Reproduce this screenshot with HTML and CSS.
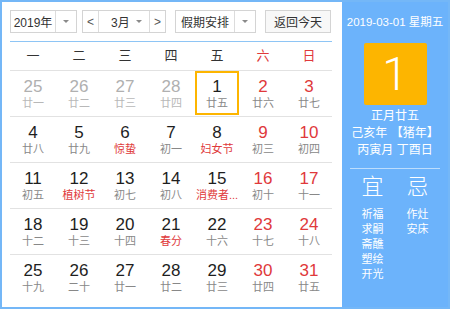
FILE: index.html
```html
<!DOCTYPE html>
<html lang="zh-CN">
<head>
    <meta charset="UTF-8">
    <meta name="viewport" content="width=device-width, initial-scale=1.0">
    <title>万年历</title>
    <link rel="stylesheet" href="styles.css">
</head>
<body>
    <div class="calendar">
        <div class="main">
            <div class="toolbar">
                <div class="select year-select">
                    <span class="select-text">2019年</span>
                    <span class="select-arrow"><i class="caret"></i></span>
                </div>
                <div class="month-group">
                    <span class="nav-btn">&lt;</span>
                    <div class="month-select">
                        <span class="select-text">3月</span>
                        <i class="caret"></i>
                    </div>
                    <span class="nav-btn">&gt;</span>
                </div>
                <div class="select holiday-select">
                    <span class="select-text">假期安排</span>
                    <span class="select-arrow"><i class="caret"></i></span>
                </div>
                <button class="today-btn">返回今天</button>
            </div>

            <div class="weekdays">
                <span>一</span><span>二</span><span>三</span><span>四</span><span>五</span>
                <span class="weekend">六</span><span class="weekend">日</span>
            </div>

            <div class="days">
                <div class="day other"><b>25</b><small>廿一</small></div>
                <div class="day other"><b>26</b><small>廿二</small></div>
                <div class="day other"><b>27</b><small>廿三</small></div>
                <div class="day other"><b>28</b><small>廿四</small></div>
                <div class="day today"><b>1</b><small>廿五</small></div>
                <div class="day weekend"><b>2</b><small>廿六</small></div>
                <div class="day weekend"><b>3</b><small>廿七</small></div>

                <div class="day"><b>4</b><small>廿八</small></div>
                <div class="day"><b>5</b><small>廿九</small></div>
                <div class="day"><b>6</b><small class="festival">惊蛰</small></div>
                <div class="day"><b>7</b><small>初一</small></div>
                <div class="day"><b>8</b><small class="festival">妇女节</small></div>
                <div class="day weekend"><b>9</b><small>初三</small></div>
                <div class="day weekend"><b>10</b><small>初四</small></div>

                <div class="day"><b>11</b><small>初五</small></div>
                <div class="day"><b>12</b><small class="festival">植树节</small></div>
                <div class="day"><b>13</b><small>初七</small></div>
                <div class="day"><b>14</b><small>初八</small></div>
                <div class="day"><b>15</b><small class="festival">消费者...</small></div>
                <div class="day weekend"><b>16</b><small>初十</small></div>
                <div class="day weekend"><b>17</b><small>十一</small></div>

                <div class="day"><b>18</b><small>十二</small></div>
                <div class="day"><b>19</b><small>十三</small></div>
                <div class="day"><b>20</b><small>十四</small></div>
                <div class="day"><b>21</b><small class="festival">春分</small></div>
                <div class="day"><b>22</b><small>十六</small></div>
                <div class="day weekend"><b>23</b><small>十七</small></div>
                <div class="day weekend"><b>24</b><small>十八</small></div>

                <div class="day"><b>25</b><small>十九</small></div>
                <div class="day"><b>26</b><small>二十</small></div>
                <div class="day"><b>27</b><small>廿一</small></div>
                <div class="day"><b>28</b><small>廿二</small></div>
                <div class="day"><b>29</b><small>廿三</small></div>
                <div class="day weekend"><b>30</b><small>廿四</small></div>
                <div class="day weekend"><b>31</b><small>廿五</small></div>
            </div>
        </div>

        <div class="side">
            <div class="side-date">2019-03-01 星期五</div>
            <div class="big-day">1</div>
            <div class="lunar">
                <div>正月廿五</div>
                <div>己亥年 【猪年】</div>
                <div>丙寅月 丁酉日</div>
            </div>
            <div class="advice">
                <div class="advice-col">
                    <div class="advice-title">宜</div>
                    <div>祈福</div>
                    <div>求嗣</div>
                    <div>斋醮</div>
                    <div>塑绘</div>
                    <div>开光</div>
                </div>
                <div class="advice-col">
                    <div class="advice-title">忌</div>
                    <div>作灶</div>
                    <div>安床</div>
                </div>
            </div>
        </div>
    </div>
</body>
</html>
```

FILE: styles.css
```css
:root {
    --blue: #6cb3fb;
    --border-blue: #74b7f7;
    --red: #e0393b;
    --gray: #888888;
    --line: #e2e2e2;
    --yellow: #fdb500;
}
body {
    margin: 0;
    background-color: #ffffff;
    font-family: "Liberation Sans", "Noto Sans CJK SC", sans-serif;
    color: #222222;
}
.calendar {
    display: flex;
    width: 450px;
    height: 309px;
    box-sizing: border-box;
    border: 2px solid var(--border-blue);
    background-color: #ffffff;
}
.main {
    width: 340px;
    box-sizing: border-box;
    padding: 8px 10px 0 8px;
}

/* toolbar */
.toolbar {
    display: flex;
    align-items: center;
    height: 23px;
    font-size: 12px;
    color: #333333;
}
.select,
.month-group,
.today-btn {
    display: flex;
    align-items: stretch;
    height: 23px;
    box-sizing: border-box;
    border: 1px solid #d4d4d4;
    background-color: #ffffff;
}
.select-text {
    display: flex;
    align-items: center;
    justify-content: center;
    flex: 1;
}
.select-arrow {
    display: flex;
    align-items: center;
    justify-content: center;
    width: 20px;
    border-left: 1px solid #dcdcdc;
}
.caret {
    display: block;
    width: 0;
    height: 0;
    border-left: 3px solid transparent;
    border-right: 3px solid transparent;
    border-top: 3px solid #8a8a8a;
}
.year-select {
    width: 67px;
}
.month-group {
    width: 84px;
    margin-left: 5px;
}
.nav-btn {
    display: flex;
    align-items: center;
    justify-content: center;
    width: 15px;
    color: #555555;
    font-size: 12px;
}
.month-select {
    display: flex;
    align-items: center;
    justify-content: space-between;
    flex: 1;
    padding: 0 7px 0 12px;
    border-left: 1px solid #dcdcdc;
    border-right: 1px solid #dcdcdc;
}
.month-select .select-text {
    flex: none;
}
.holiday-select {
    width: 81px;
    margin-left: 9px;
}
.today-btn {
    width: 66px;
    margin-left: 9px;
    padding: 0;
    align-items: center;
    justify-content: center;
    font-family: inherit;
    font-size: 12px;
    color: #333333;
    background-color: #f8f8f8;
}

/* weekday header */
.weekdays {
    display: grid;
    grid-template-columns: repeat(7, 46px);
    margin-top: 8px;
    border-top: 1px solid #8ec5f5;
    height: 28px;
    line-height: 28px;
    font-size: 13px;
    text-align: center;
    color: #333333;
}
.weekdays .weekend {
    color: var(--red);
}

/* days grid */
.days {
    display: grid;
    grid-template-columns: repeat(7, 46px);
    grid-auto-rows: 46px;
}
.day {
    position: relative;
    box-sizing: border-box;
    border-top: 1px solid var(--line);
    padding-top: 6px;
    text-align: center;
}
.day b {
    display: block;
    font-weight: normal;
    font-size: 17px;
    line-height: 20px;
    color: #1e1e1e;
}
.day small {
    display: block;
    font-size: 11px;
    line-height: 13px;
    color: var(--gray);
    white-space: nowrap;
}
.day.weekend b {
    color: var(--red);
}
.day small.festival {
    color: var(--red);
}
.day.other b {
    color: #b0b0b0;
}
.day.other small {
    color: #b8b8b8;
}
.day.today::after {
    content: '';
    position: absolute;
    top: 0;
    left: 1px;
    right: 1px;
    bottom: 1px;
    border: 2px solid var(--yellow);
}

/* side panel */
.side {
    flex: 1;
    background-color: var(--blue);
    color: #ffffff;
    text-align: center;
    padding: 13px 4px 0 4px;
}
.side-date {
    font-size: 11.5px;
    line-height: 14px;
    white-space: nowrap;
}
.big-day {
    width: 63px;
    height: 62px;
    margin: 14px auto 0;
    border-radius: 2px;
    background-color: var(--yellow);
    font-family: Roboto, "Liberation Sans", sans-serif;
    font-weight: 300;
    font-size: 46px;
    line-height: 62px;
}
.lunar {
    margin: 3px 4px 0;
    font-size: 12px;
    line-height: 17px;
    padding-bottom: 9px;
    border-bottom: 1px solid rgba(255, 255, 255, 0.55);
}
.advice {
    display: flex;
    margin: 0 4px;
    font-size: 11px;
    line-height: 15px;
}
.advice-col {
    flex: 1;
}
.advice-title {
    font-size: 22px;
    font-weight: 300;
    line-height: 36px;
    margin-bottom: 2px;
}
```
